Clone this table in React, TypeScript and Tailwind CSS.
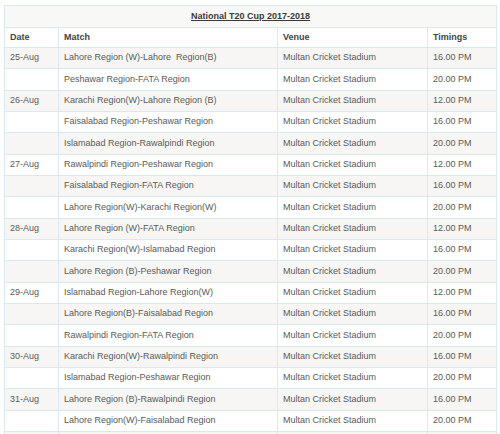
import React from "react";

// ─── Data ─────────────────────────────────────────────────────────────────────

interface Fixture {
  date: string;
  match: string;
  venue: string;
  time: string;
}

const VENUE = "Multan Cricket Stadium";

const FIXTURES: Fixture[] = [
  { date: "25-Aug", match: "Lahore Region (W)-Lahore  Region(B)", venue: VENUE, time: "16.00 PM" },
  { date: "", match: "Peshawar Region-FATA Region", venue: VENUE, time: "20.00 PM" },
  { date: "26-Aug", match: "Karachi Region(W)-Lahore Region (B)", venue: VENUE, time: "12.00 PM" },
  { date: "", match: "Faisalabad Region-Peshawar Region", venue: VENUE, time: "16.00 PM" },
  { date: "", match: "Islamabad Region-Rawalpindi Region", venue: VENUE, time: "20.00 PM" },
  { date: "27-Aug", match: "Rawalpindi Region-Peshawar Region", venue: VENUE, time: "12.00 PM" },
  { date: "", match: "Faisalabad Region-FATA Region", venue: VENUE, time: "16.00 PM" },
  { date: "", match: "Lahore Region(W)-Karachi Region(W)", venue: VENUE, time: "20.00 PM" },
  { date: "28-Aug", match: "Lahore Region (W)-FATA Region", venue: VENUE, time: "12.00 PM" },
  { date: "", match: "Karachi Region(W)-Islamabad Region", venue: VENUE, time: "16.00 PM" },
  { date: "", match: "Lahore Region (B)-Peshawar Region", venue: VENUE, time: "20.00 PM" },
  { date: "29-Aug", match: "Islamabad Region-Lahore Region(W)", venue: VENUE, time: "12.00 PM" },
  { date: "", match: "Lahore Region(B)-Faisalabad Region", venue: VENUE, time: "16.00 PM" },
  { date: "", match: "Rawalpindi Region-FATA Region", venue: VENUE, time: "20.00 PM" },
  { date: "30-Aug", match: "Karachi Region(W)-Rawalpindi Region", venue: VENUE, time: "16.00 PM" },
  { date: "", match: "Islamabad Region-Peshawar Region", venue: VENUE, time: "20.00 PM" },
  { date: "31-Aug", match: "Lahore Region (B)-Rawalpindi Region", venue: VENUE, time: "16.00 PM" },
  { date: "", match: "Lahore Region(W)-Faisalabad Region", venue: VENUE, time: "20.00 PM" },
];

const cell = "border border-[#d8e9f3] px-[5px] py-0 text-left align-middle whitespace-nowrap";

// ─── App ──────────────────────────────────────────────────────────────────────

export default function App() {
  return (
    <div
      className="bg-white w-[500px] h-[434px] overflow-hidden pl-[4px] pt-[5px]"
      style={{ fontFamily: '"Liberation Sans", Arial, sans-serif' }}
    >
      <table className="border-collapse table-fixed w-[492px] text-[9px] text-[#5a5a5a]">
        <colgroup>
          <col className="w-[54px]" />
          <col className="w-[219px]" />
          <col className="w-[150px]" />
          <col className="w-[69px]" />
        </colgroup>
        <thead>
          {/* Title */}
          <tr className="h-[22px] bg-[#f8f8f7]">
            <th colSpan={4} className="border border-[#d8e9f3] text-center font-bold text-[#3a3a3a] underline">
              National T20 Cup 2017-2018
            </th>
          </tr>
          {/* Column headings */}
          <tr className="h-[20px] bg-white font-bold text-[#444]">
            <th className={cell}>Date</th>
            <th className={cell}>Match</th>
            <th className={cell}>Venue</th>
            <th className={cell}>Timings</th>
          </tr>
        </thead>
        <tbody>
          {FIXTURES.map((f, i) => (
            <tr
              key={i}
              className={`h-[21.33px] ${i % 2 === 0 ? "bg-[#f7f6f4]" : "bg-white"}`}
            >
              <td className={cell}>{f.date}</td>
              <td className={`${cell} whitespace-pre`}>{f.match}</td>
              <td className={cell}>{f.venue}</td>
              <td className={cell}>{f.time}</td>
            </tr>
          ))}
          <tr className="h-[21px] bg-[#f7f6f4]">
            <td className={cell}></td>
            <td className={cell}></td>
            <td className={cell}></td>
            <td className={cell}></td>
          </tr>
        </tbody>
      </table>
    </div>
  );
}
